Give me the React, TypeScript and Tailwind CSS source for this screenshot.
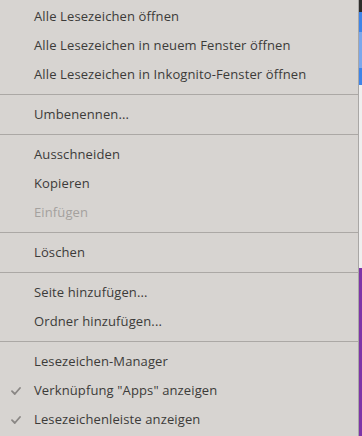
import React from "react";

type Entry =
  | { kind: "item"; label: string; disabled?: boolean; checked?: boolean }
  | { kind: "sep" };

const entries: Entry[] = [
  { kind: "item", label: "Alle Lesezeichen öffnen" },
  { kind: "item", label: "Alle Lesezeichen in neuem Fenster öffnen" },
  { kind: "item", label: "Alle Lesezeichen in Inkognito-Fenster öffnen" },
  { kind: "sep" },
  { kind: "item", label: "Umbenennen..." },
  { kind: "sep" },
  { kind: "item", label: "Ausschneiden" },
  { kind: "item", label: "Kopieren" },
  { kind: "item", label: "Einfügen", disabled: true },
  { kind: "sep" },
  { kind: "item", label: "Löschen" },
  { kind: "sep" },
  { kind: "item", label: "Seite hinzufügen..." },
  { kind: "item", label: "Ordner hinzufügen..." },
  { kind: "sep" },
  { kind: "item", label: "Lesezeichen-Manager" },
  { kind: "item", label: 'Verknüpfung "Apps" anzeigen', checked: true },
  { kind: "item", label: "Lesezeichenleiste anzeigen", checked: true },
];

const Check = () => (
  <svg width="10" height="8" viewBox="0 0 10 8" className="absolute left-[11px] top-[11px]">
    <path d="M1 4.2 L3.8 7 L9 1" fill="none" stroke="#8a8785" strokeWidth="1.8" strokeLinecap="round" strokeLinejoin="round" />
  </svg>
);

export default function App() {
  return (
    <div className="flex h-[436px] w-[362px] overflow-hidden" style={{ fontFamily: '"Open Sans", "DejaVu Sans", sans-serif' }}>
      <div className="w-[359px] shrink-0 border-r border-[#a9a7a5] bg-[#d7d4d1] pt-[2px]">
        {entries.map((e, i) =>
          e.kind === "sep" ? (
            <div key={i} className="py-[5px]">
              <div className="h-px bg-[#aba8a5]" />
            </div>
          ) : (
            <div
              key={i}
              className={
                "relative flex h-[29px] items-center pl-[34px] text-[13px] tracking-[0.12px] " +
                (e.disabled ? "text-[#a4a19e]" : "text-[#3c3b39]")
              }
            >
              {e.checked && <Check />}
              {e.label}
            </div>
          )
        )}
      </div>
      <div className="flex flex-1 flex-col">
        <div className="h-[12px] bg-[#2e2d2b]" />
        <div className="h-[20px] bg-[#3e84e8]" />
        <div className="h-[36px] bg-[#7aa7ec]" />
        <div className="h-[17px] bg-[#3e84e8]" />
        <div className="h-[183px] bg-[#efefef]" />
        <div className="flex-1 bg-[#7d35a8]" />
      </div>
    </div>
  );
}
